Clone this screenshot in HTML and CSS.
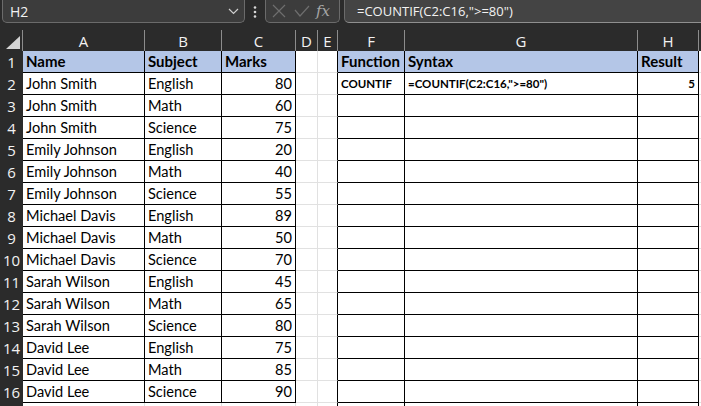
FILE: index.html
```html
<!DOCTYPE html>
<html>
<head>
<meta charset="utf-8">
<link rel="stylesheet" href="styles.css">
</head>
<body>
<div class="toolbar">
  <div class="namebox">
    <span>H2</span>
    <svg class="chev" width="11" height="7" viewBox="0 0 11 7"><path d="M1 1 L5.5 5.5 L10 1" fill="none" stroke="#cfcfcf" stroke-width="1.2"/></svg>
  </div>
  <div class="kebab">
    <svg width="4" height="12" viewBox="0 0 4 12"><circle cx="2" cy="1.5" r="1.3" fill="#d8d8d8"/><circle cx="2" cy="6" r="1.3" fill="#d8d8d8"/><circle cx="2" cy="10.5" r="1.3" fill="#d8d8d8"/></svg>
  </div>
  <div class="fxbox">
    <svg width="14" height="14" viewBox="0 0 14 14"><path d="M1 1 L13 13 M13 1 L1 13" stroke="#6e6e6e" stroke-width="1.2" fill="none"/></svg>
    <svg width="16" height="12" viewBox="0 0 16 12"><path d="M1 5 L6 11 L15 1" stroke="#6e6e6e" stroke-width="1.2" fill="none"/></svg>
    <span class="fx">fx</span>
  </div>
  <div class="formula">=COUNTIF(C2:C16,"&gt;=80")</div>
</div>

<div class="sheet">
  <div class="ch corner"><svg width="14" height="13" viewBox="0 0 14 13"><path d="M14 0 L14 13 L0 13 Z" fill="#d4d4d4"/></svg></div>
  <div class="ch">A</div><div class="ch">B</div><div class="ch">C</div><div class="ch">D</div><div class="ch">E</div><div class="ch">F</div><div class="ch">G</div><div class="ch">H</div><div class="ch last"></div>

  <div class="rh">1</div><div class="c t hd">Name</div><div class="c t hd">Subject</div><div class="c t hd">Marks</div><div class="c g"></div><div class="c e"></div><div class="c t hd">Function</div><div class="c t hd">Syntax</div><div class="c t hd">Result</div><div class="c g"></div>

  <div class="rh">2</div><div class="c t">John Smith</div><div class="c t">English</div><div class="c t num">80</div><div class="c g"></div><div class="c e"></div><div class="c t sm">COUNTIF</div><div class="c t sm">=COUNTIF(C2:C16,"&gt;=80")</div><div class="c t num sm">5</div><div class="c g"></div>

  <div class="rh">3</div><div class="c t">John Smith</div><div class="c t">Math</div><div class="c t num">60</div><div class="c g"></div><div class="c e"></div><div class="c t"></div><div class="c t"></div><div class="c t"></div><div class="c g"></div>

  <div class="rh">4</div><div class="c t">John Smith</div><div class="c t">Science</div><div class="c t num">75</div><div class="c g"></div><div class="c e"></div><div class="c t"></div><div class="c t"></div><div class="c t"></div><div class="c g"></div>

  <div class="rh">5</div><div class="c t">Emily Johnson</div><div class="c t">English</div><div class="c t num">20</div><div class="c g"></div><div class="c e"></div><div class="c t"></div><div class="c t"></div><div class="c t"></div><div class="c g"></div>

  <div class="rh">6</div><div class="c t">Emily Johnson</div><div class="c t">Math</div><div class="c t num">40</div><div class="c g"></div><div class="c e"></div><div class="c t"></div><div class="c t"></div><div class="c t"></div><div class="c g"></div>

  <div class="rh">7</div><div class="c t">Emily Johnson</div><div class="c t">Science</div><div class="c t num">55</div><div class="c g"></div><div class="c e"></div><div class="c t"></div><div class="c t"></div><div class="c t"></div><div class="c g"></div>

  <div class="rh">8</div><div class="c t">Michael Davis</div><div class="c t">English</div><div class="c t num">89</div><div class="c g"></div><div class="c e"></div><div class="c t"></div><div class="c t"></div><div class="c t"></div><div class="c g"></div>

  <div class="rh">9</div><div class="c t">Michael Davis</div><div class="c t">Math</div><div class="c t num">50</div><div class="c g"></div><div class="c e"></div><div class="c t"></div><div class="c t"></div><div class="c t"></div><div class="c g"></div>

  <div class="rh">10</div><div class="c t">Michael Davis</div><div class="c t">Science</div><div class="c t num">70</div><div class="c g"></div><div class="c e"></div><div class="c t"></div><div class="c t"></div><div class="c t"></div><div class="c g"></div>

  <div class="rh">11</div><div class="c t">Sarah Wilson</div><div class="c t">English</div><div class="c t num">45</div><div class="c g"></div><div class="c e"></div><div class="c t"></div><div class="c t"></div><div class="c t"></div><div class="c g"></div>

  <div class="rh">12</div><div class="c t">Sarah Wilson</div><div class="c t">Math</div><div class="c t num">65</div><div class="c g"></div><div class="c e"></div><div class="c t"></div><div class="c t"></div><div class="c t"></div><div class="c g"></div>

  <div class="rh">13</div><div class="c t">Sarah Wilson</div><div class="c t">Science</div><div class="c t num">80</div><div class="c g"></div><div class="c e"></div><div class="c t"></div><div class="c t"></div><div class="c t"></div><div class="c g"></div>

  <div class="rh">14</div><div class="c t">David Lee</div><div class="c t">English</div><div class="c t num">75</div><div class="c g"></div><div class="c e"></div><div class="c t"></div><div class="c t"></div><div class="c t"></div><div class="c g"></div>

  <div class="rh">15</div><div class="c t">David Lee</div><div class="c t">Math</div><div class="c t num">85</div><div class="c g"></div><div class="c e"></div><div class="c t"></div><div class="c t"></div><div class="c t"></div><div class="c g"></div>

  <div class="rh">16</div><div class="c t">David Lee</div><div class="c t">Science</div><div class="c t num">90</div><div class="c g"></div><div class="c e"></div><div class="c t"></div><div class="c t"></div><div class="c t"></div><div class="c g"></div>

  <div class="rh"></div><div class="c g"></div><div class="c g"></div><div class="c g"></div><div class="c g"></div><div class="c e"></div><div class="c t"></div><div class="c t"></div><div class="c t"></div><div class="c g"></div>
</div>
</body>
</html>
```

FILE: styles.css
```css
html, body {
  margin: 0;
  padding: 0;
}
body {
  width: 701px;
  height: 406px;
  overflow: hidden;
  background: #2b2b2b;
}

/* ---------- formula bar ---------- */
.toolbar {
  display: flex;
  height: 23px;
  font-family: "Open Sans", "Noto Sans", sans-serif;
  font-size: 14px;
  color: #f2f2f2;
}
.namebox {
  margin-left: 2px;
  width: 243px;
  box-sizing: border-box;
  background: #3c3c3c;
  border: 1px solid #6b6b6b;
  border-top: none;
  border-radius: 0 0 5px 5px;
  display: flex;
  align-items: center;
  justify-content: space-between;
  padding: 0 5px 0 7px;
}
.chev {
  margin-top: 1px;
}
.kebab {
  width: 20px;
  display: flex;
  align-items: center;
  justify-content: center;
}
.fxbox {
  width: 75px;
  box-sizing: border-box;
  background: #3c3c3c;
  border: 1px solid #6b6b6b;
  border-top: none;
  border-radius: 0 0 5px 5px;
  display: flex;
  align-items: center;
  gap: 8px;
  padding: 0 0 0 6px;
}
.fx {
  font-family: "DejaVu Serif", "Liberation Serif", serif;
  font-style: italic;
  font-size: 15px;
  color: #a6a6a6;
  margin-left: -2px;
}
.formula {
  flex: 1;
  margin-left: 4px;
  background: #444444;
  border-left: 1px solid #6b6b6b;
  border-bottom: 1px solid #8f8f8f;
  border-radius: 0 0 0 5px;
  display: flex;
  align-items: center;
  padding-left: 12px;
  font-size: 13px;
}

/* ---------- sheet grid ---------- */
.sheet {
  margin-top: 7px;
  display: grid;
  grid-template-columns: 23px 122px 77px 74px 22px 20px 67px 233px 61px 1fr;
  grid-template-rows: 21px repeat(17, 22px);
}
.ch {
  box-sizing: border-box;
  border-right: 1px solid #8c8c8c;
  color: #f2f2f2;
  font-family: "Open Sans", "Noto Sans", sans-serif;
  font-size: 15px;
  display: flex;
  align-items: center;
  justify-content: center;
}
.ch.last {
  border-right: none;
}
.corner {
  align-items: flex-end;
  justify-content: flex-end;
  padding: 0 2px 2px 0;
}
.rh {
  color: #f2f2f2;
  font-family: "Open Sans", "Noto Sans", sans-serif;
  font-size: 15px;
  display: flex;
  align-items: center;
  justify-content: center;
}
.c {
  box-sizing: border-box;
  background: #ffffff;
  border-right: 1px solid #e1e1e1;
  border-bottom: 1px solid #e1e1e1;
  font-family: Lato, "Liberation Sans", sans-serif;
  font-size: 14.6px;
  line-height: 17px;
  color: #000;
  padding: 0 3px;
  display: flex;
  align-items: center;
  white-space: nowrap;
  overflow: hidden;
}
.t {
  border-right-color: #000;
  border-bottom-color: #000;
}
.e {
  border-right-color: #000;
}
.num {
  justify-content: flex-end;
}
.hd {
  background: #b4c6e7;
  font-weight: 700;
  font-size: 15px;
}
.sm {
  font-size: 11.5px;
  font-weight: 700;
}
```
